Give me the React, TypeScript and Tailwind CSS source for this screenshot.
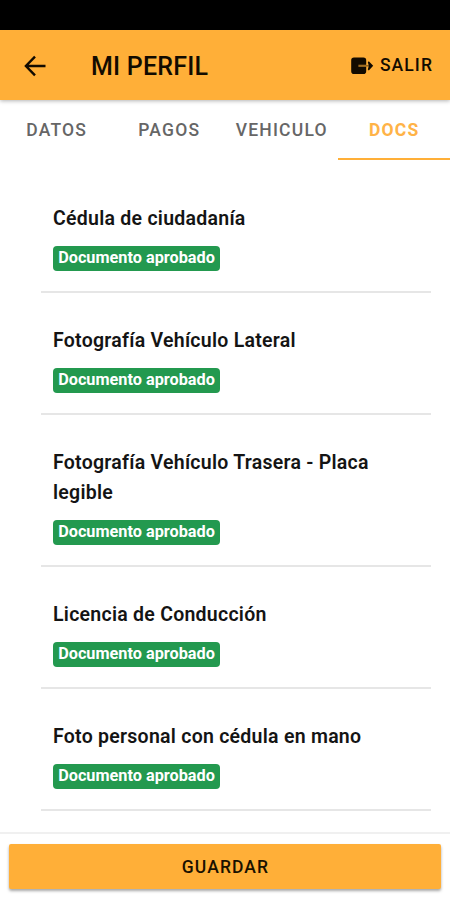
const tabs = ["DATOS", "PAGOS", "VEHICULO", "DOCS"];

const documents = [
  "Cédula de ciudadanía",
  "Fotografía Vehículo Lateral",
  "Fotografía Vehículo Trasera - Placa legible",
  "Licencia de Conducción",
  "Foto personal con cédula en mano",
];

function BackIcon() {
  return (
    <svg width="22" height="22" viewBox="0 0 22 22" fill="none" stroke="currentColor" strokeWidth="2.4">
      <path d="M21.5 11H2.5M11 1.6L1.9 11L11 20.4" />
    </svg>
  );
}

function ExitIcon() {
  return (
    <svg width="23" height="18" viewBox="0 0 23 18">
      <path
        fill="currentColor"
        d="M3 .5H12.4A2.8 2.8 0 0 1 15.2 3.3V14.2A2.8 2.8 0 0 1 12.4 17H3A2.8 2.8 0 0 1 .2 14.2V3.3A2.8 2.8 0 0 1 3 .5Z"
      />
      <path stroke="#ffaf38" strokeWidth="2.2" opacity=".6" d="M7.4 8.8H15.6" />
      <path stroke="currentColor" strokeWidth="1.4" opacity=".5" d="M15.2 8.8H19" />
      <path fill="currentColor" d="M17.8 4.2L22.2 8.8L17.8 13.4L16.8 12.4L17.8 8.8L16.8 5.2Z" />
    </svg>
  );
}

export default function App() {
  return (
    <div className="flex h-screen w-full flex-col overflow-hidden bg-white font-[Roboto,sans-serif] text-[#141414]">
      <div className="h-[30px] shrink-0 bg-black" />

      <header className="z-10 flex h-[70px] shrink-0 items-center bg-[#ffaf38] pt-px pr-[18px] pl-[24px] text-[#120b00] shadow-[0_1px_4px_rgba(0,0,0,0.3)]">
        <BackIcon />
        <h1 className="ml-[45px] pt-px text-[25px] leading-none font-medium tracking-[0.2px] whitespace-nowrap">MI PERFIL</h1>
        <button className="ml-auto flex items-center gap-[6px] text-[17.5px] leading-none font-medium tracking-[1.1px]">
          <ExitIcon />
          <span className="-mr-px pt-px">SALIR</span>
        </button>
      </header>

      <nav className="grid h-[60px] shrink-0 grid-cols-4 text-[17.5px] font-medium tracking-[1.2px]">
        {tabs.map((tab) => (
          <button
            key={tab}
            className={
              tab === "DOCS"
                ? "border-b-2 border-[#ffaf38] pt-0.5 pl-px font-bold text-[#ffb347]"
                : "border-b-2 border-transparent pt-0.5 pl-px text-[#666]"
            }
          >
            {tab}
          </button>
        ))}
      </nav>

      <main className="flex-1 overflow-hidden pt-[11px] pr-[19px] pl-[41px]">
        {documents.map((name) => (
          <section key={name} className="border-b-2 border-[#e6e6e6] pt-[33px] pr-7 pb-[20px] pl-3">
            <h2 className="text-[19.5px] leading-[30px] font-semibold tracking-[0.26px]">{name}</h2>
            <div className="mt-[12px] flex h-[25px] w-[167px] justify-center rounded-[4px] bg-[#23994f] text-[16.25px] leading-[24px] font-bold whitespace-nowrap text-white">
              Documento aprobado
            </div>
          </section>
        ))}
      </main>

      <footer className="h-[68px] shrink-0 border-t-2 border-[#f0f0f0] px-[9px] pt-[10px]">
        <button className="h-[45px] w-full rounded-[2px] bg-[#ffaf38] pt-px pl-px text-[17.5px] font-medium tracking-[1.1px] text-[#1a1100] shadow-[0_2px_3px_rgba(0,0,0,0.35)]">
          GUARDAR
        </button>
      </footer>
    </div>
  );
}
